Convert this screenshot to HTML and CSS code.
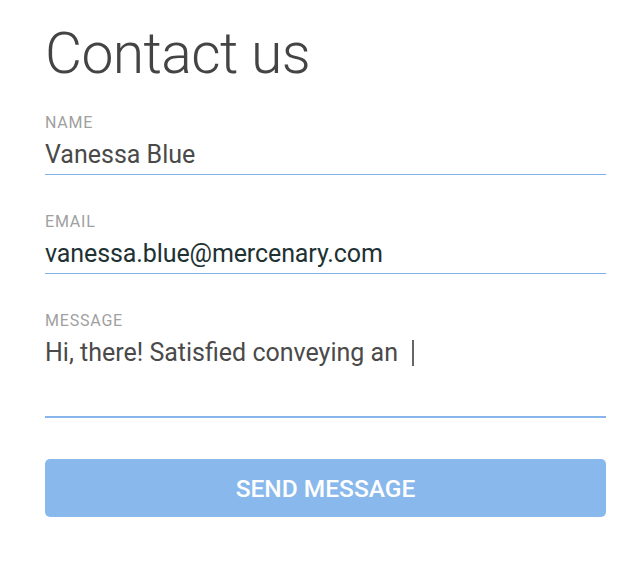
FILE: index.html
```html
<!DOCTYPE html>
<html>
<head>
<meta charset="utf-8">
<link rel="stylesheet" href="styles.css">
</head>
<body>
<main class="contact">
  <h1 class="title">Contact us</h1>
  <form class="form">
    <div class="field">
      <label class="label">NAME</label>
      <div class="value">Vanessa Blue</div>
    </div>
    <div class="field">
      <label class="label">EMAIL</label>
      <div class="value value-dark">vanessa.blue@mercenary.com</div>
    </div>
    <div class="field field-message">
      <label class="label">MESSAGE</label>
      <div class="value">Hi, there! Satisfied conveying an<span class="cursor"></span></div>
    </div>
    <button type="button" class="send">SEND MESSAGE</button>
  </form>
</main>
</body>
</html>
```
FILE: styles.css
```css
html, body {
  margin: 0;
  padding: 0;
  background: #fff;
}
body {
  font-family: Roboto, "Liberation Sans", sans-serif;
}
.contact {
  width: 561px;
  padding: 21px 0 0 45px;
}
.title {
  margin: 0;
  font-size: 57px;
  font-weight: 300;
  line-height: 66px;
  color: #444;
  letter-spacing: -0.6px;
}
.form {
  display: flex;
  flex-direction: column;
  margin-top: 28px;
}
.field {
  display: flex;
  flex-direction: column;
  border-bottom: 1px solid #7fb2ec;
  margin-bottom: 39px;
}
.label {
  font-size: 16px;
  line-height: 16px;
  color: #a0a0a0;
  letter-spacing: 0.8px;
}
.value {
  font-size: 25px;
  line-height: 30px;
  color: #4a4a4a;
  padding: 9px 0 4px;
  display: flex;
  align-items: center;
}
.value-dark {
  color: #1e3234;
  letter-spacing: -0.1px;
}
.field-message {
  border-bottom: 2px solid #86b6ec;
  margin-bottom: 41px;
}
.field-message .value {
  padding-bottom: 48px;
}
.cursor {
  display: inline-block;
  width: 2px;
  height: 26px;
  margin-left: 14px;
  background: #666;
}
.send {
  height: 58px;
  border: none;
  border-radius: 5px;
  background: #89b9ec;
  color: #fff;
  font-family: Roboto, "Liberation Sans", sans-serif;
  font-size: 24.5px;
  font-weight: 500;
  padding: 0;
}
```
